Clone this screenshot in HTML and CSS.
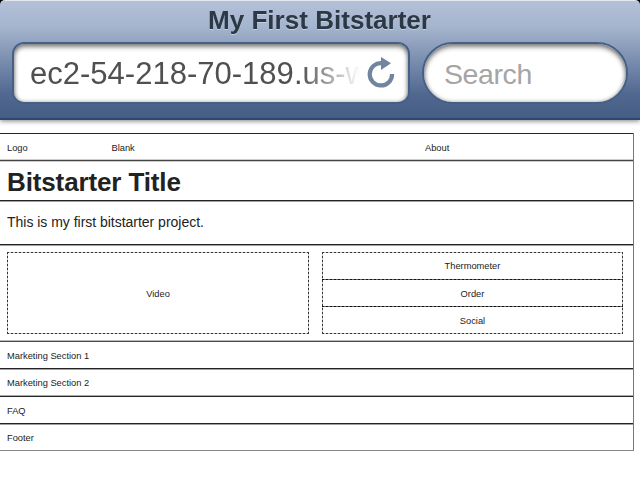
FILE: index.html
```html
<!DOCTYPE html>
<html lang="en">
<head>
<meta charset="utf-8">
<title>My First Bitstarter</title>
<link rel="stylesheet" href="styles.css">
</head>
<body>
<header class="browser">
  <div class="browser-title"><svg width="240" height="40"><text x="8" y="28" textLength="223" lengthAdjust="spacingAndGlyphs">My First Bitstarter</text></svg></div>
  <div class="fields">
    <div class="field address">
      <span class="url"><svg width="330" height="52"><text x="0" y="37" textLength="338" lengthAdjust="spacingAndGlyphs">ec2-54-218-70-189.us-w</text></svg></span>
      <svg class="reload" width="28" height="32" viewBox="0 0 28 32"><path d="M15 6.1A11.2 11.2 0 1 0 25.1 17" fill="none" stroke="#71859f" stroke-width="4.2"/><path d="M14 0L24 6.3L14 13Z" fill="#71859f"/></svg>
    </div>
    <div class="field search">Search</div>
  </div>
</header>
<main class="page">
  <nav class="row nav"><span>Logo</span><span>Blank</span><span>About</span></nav>
  <h1 class="row heading">Bitstarter Title</h1>
  <p class="row intro">This is my first bitstarter project.</p>
  <section class="row media">
    <div class="video dotted">Video</div>
    <div class="stack dotted"><div>Thermometer</div><div>Order</div><div>Social</div></div>
  </section>
  <section class="row marketing">Marketing Section 1</section>
  <section class="row second">Marketing Section 2</section>
  <section class="row faq">FAQ</section>
  <footer class="row footer">Footer</footer>
</main>
</body>
</html>
```
FILE: styles.css
```css
* { box-sizing: border-box; }
body { margin: 0; height: 477px; overflow: hidden; isolation: isolate; background: #fff; color: #222; font: 9.3px/12px "Liberation Sans", Arial, sans-serif; }
.browser { height: 120px; background: linear-gradient(#b3c1d8, #a5b5ce 22%, #7488aa 55%, #50678f 80%, #455e86); border-top: 1px solid #e2e7ef; border-bottom: 2px solid #2c4770; border-radius: 5px 5px 0 0; box-shadow: 0 1px 5px rgba(0,0,0,.5); }
body::before { content: ""; position: absolute; z-index: -1; top: 0; left: 0; right: 0; height: 10px; background: #000; }
.browser-title { display: flex; justify-content: center; height: 41px; padding-right: 1px; }
.browser-title text { font-size: 26px; font-weight: bold; fill: #2d3846; }
.browser-title svg { filter: drop-shadow(0 1px 0 #c4cedd); }
.fields { display: flex; gap: 12px; padding: 0 12px; }
.field { height: 62px; border: 2px solid #456087; background: #fff; box-shadow: inset 0 3px 5px rgba(0,0,0,.45), inset 0 0 4px rgba(0,0,0,.3); }
.address { width: 398px; border-radius: 12px; display: flex; align-items: center; padding-left: 16px; }
.url { width: 330px; height: 52px; overflow: hidden; -webkit-mask-image: linear-gradient(90deg, #000 82%, transparent 100%); mask-image: linear-gradient(90deg, #000 82%, transparent 100%); }
.url text { font-size: 31px; fill: #505050; }
.reload { margin: 0 0 0 7px; }
.search { width: 206px; border-radius: 31px; padding-left: 20px; color: #a5a5a5; font-size: 28.5px; letter-spacing: -.4px; line-height: 60px; }
.page { width: 634px; margin-top: 13px; border-right: 1px solid #777; border-bottom: 1px solid #888; }
.row { margin: 0; padding-left: 7px; border-top: 1px solid #242424; box-shadow: inset 0 1px #a0a0a0; }
.nav { height: 27px; display: grid; grid-template-columns: 104.5px 313.5px 1fr; line-height: 28px; box-shadow: none; border-bottom: 1px solid #ccc; }
.heading { height: 40px; font-size: 26px; letter-spacing: -.13px; line-height: 43px; border-top-color: #444; box-shadow: inset 0 1px #ccc; }
.intro { height: 44px; font-size: 14px; letter-spacing: -.02px; line-height: 42px; }
.media { height: 97px; display: flex; gap: 13px; padding-top: 7px; border-bottom: 1px solid #bbb; }
.dotted {
  --h: repeating-linear-gradient(90deg, #333 0 2px, #c4c4c4 2px 4px);
  --v: repeating-linear-gradient(#333 0 2px, #c4c4c4 2px 4px);
  height: 82px; text-align: center;
  background: var(--h) top / 100% 1px no-repeat, var(--h) bottom / 100% 1px no-repeat, var(--v) left / 1px 100% no-repeat, var(--v) right / 1px 100% no-repeat;
}
.video { width: 302px; line-height: 84px; }
.stack { width: 301px; line-height: 28px; }
.stack div { height: 27px; }
.stack div + div { line-height: 30px; background: repeating-linear-gradient(90deg, #111 0 2px, #666 2px 4px) top / 100% 1px no-repeat; }
.marketing { height: 27px; line-height: 29px; border-top-color: #484848; box-shadow: none; }
.second { height: 28px; line-height: 29px; border-bottom: 1px solid #aaa; }
.faq { height: 27px; line-height: 28px; box-shadow: none; }
.footer { height: 27px; line-height: 29px; }
```
